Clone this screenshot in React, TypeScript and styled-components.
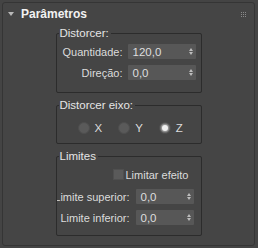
import styled, { createGlobalStyle } from 'styled-components';

const Global = createGlobalStyle`
html, body {
  margin: 0;
  padding: 0;
  background: #444444;
}
body {
  font-family: "Liberation Sans", Arial, sans-serif;
  font-size: 11px;
  color: #dcdcdc;
}
`;

const Panel = styled.div`
  box-sizing: border-box;
  margin: 2px 3px 2px 2px;
  width: 253px;
  height: 244px;
  background: #454545;
  border: 1px solid #353535;
  border-radius: 3px;
  display: flex;
  flex-direction: column;
`;

const Header = styled.div`
  display: flex;
  align-items: center;
  height: 22px;
  padding: 0 8px 0 5px;
  gap: 7px;
`;

const Arrow = styled.span`
  width: 0;
  height: 0;
  border-left: 3px solid transparent;
  border-right: 3px solid transparent;
  border-top: 4px solid #b8b8b8;
`;

const Title = styled.span`
  flex: 1;
  font-weight: bold;
  font-size: 12px;
  color: #f2f2f2;
`;

const Grip = styled.div`
  display: grid;
  grid-template-columns: repeat(3, 1px);
  gap: 1px;
  span {
    width: 1px;
    height: 1px;
    background: #8a8a8a;
  }
`;

const Body = styled.div`
  display: flex;
  flex-direction: column;
  align-items: center;
  gap: 6px;
  padding-top: 2px;
`;

const Group = styled.fieldset<{ $pad: string }>`
  box-sizing: border-box;
  width: 146px;
  margin: 0;
  padding: ${(p) => p.$pad};
  border: 1px solid #2c2c2c;
  border-radius: 2px;
  min-width: 0;
`;

const Legend = styled.legend`
  padding: 0 2px 0 1px;
  margin-left: 2px;
  font-size: 11.5px;
  line-height: 13px;
  color: #e6e6e6;
`;

const Rows = styled.div`
  display: flex;
  flex-direction: column;
  gap: 6px;
`;

const Row = styled.div<{ $label: number; $gap: number }>`
  display: grid;
  grid-template-columns: ${(p) => p.$label}px 1fr;
  column-gap: ${(p) => p.$gap}px;
  align-items: center;
  height: 15px;
`;

const Label = styled.div`
  display: flex;
  justify-content: flex-end;
  overflow: hidden;
  white-space: nowrap;
  font-size: 11px;
`;

const Spinner = styled.div`
  display: flex;
  align-items: center;
  height: 15px;
  background: #575757;
  border-radius: 1px;
  padding: 0 3px 0 5px;
  font-size: 11.5px;
  color: #dedede;
`;

const Value = styled.span`
  flex: 1;
`;

const Arrows = styled.span`
  display: flex;
  flex-direction: column;
  gap: 1px;
  i {
    width: 0;
    height: 0;
    border-left: 2.5px solid transparent;
    border-right: 2.5px solid transparent;
  }
  i:first-child {
    border-bottom: 3px solid #bdbdbd;
  }
  i:last-child {
    border-top: 3px solid #bdbdbd;
  }
`;

const RadioRow = styled.div`
  display: flex;
  align-items: center;
  gap: 16px;
  padding-left: 21px;
`;

const RadioItem = styled.label`
  display: flex;
  align-items: center;
  gap: 5px;
  font-size: 11.5px;
`;

const Radio = styled.span<{ $on?: boolean }>`
  box-sizing: border-box;
  width: 12px;
  height: 12px;
  border-radius: 50%;
  background: ${(p) => (p.$on ? '#6a6a6a' : '#5a5a5a')};
  border: 1px solid #4e4e4e;
  display: flex;
  align-items: center;
  justify-content: center;
  &::after {
    content: '';
    display: ${(p) => (p.$on ? 'block' : 'none')};
    width: 6px;
    height: 6px;
    border-radius: 50%;
    background: #f0f0f0;
    box-shadow: 0 0 1px 1px #9a9a9a;
  }
`;

const CheckRow = styled.div`
  display: flex;
  align-items: center;
  gap: 2px;
  padding-left: 56px;
  height: 11px;
  margin-bottom: 9px;
  font-size: 11px;
  white-space: nowrap;
`;

const Check = styled.span`
  flex: none;
  box-sizing: border-box;
  width: 11px;
  height: 11px;
  background: #5a5a5a;
  border: 1px solid #4f4f4f;
`;

const Spin = ({ value }: { value: string }) => (
  <Spinner>
    <Value>{value}</Value>
    <Arrows>
      <i />
      <i />
    </Arrows>
  </Spinner>
);

export default function App() {
  return (
    <>
      <Global />
      <Panel>
        <Header>
          <Arrow />
          <Title>Parâmetros</Title>
          <Grip>
            {Array.from({ length: 9 }).map((_, i) => (
              <span key={i} />
            ))}
          </Grip>
        </Header>
        <Body>
          <Group $pad="4px 5px 12px 0">
            <Legend>Distorcer:</Legend>
            <Rows>
              <Row $label={66} $gap={5}>
                <Label>Quantidade:</Label>
                <Spin value="120,0" />
              </Row>
              <Row $label={66} $gap={5}>
                <Label>Direção:</Label>
                <Spin value="0,0" />
              </Row>
            </Rows>
          </Group>
          <Group $pad="10px 0 9px 0">
            <Legend>Distorcer eixo:</Legend>
            <RadioRow>
              <RadioItem>
                <Radio />X
              </RadioItem>
              <RadioItem>
                <Radio />Y
              </RadioItem>
              <RadioItem>
                <Radio $on />Z
              </RadioItem>
            </RadioRow>
          </Group>
          <Group $pad="6px 7px 10px 0">
            <Legend>Limites</Legend>
            <CheckRow>
              <Check />
              Limitar efeito
            </CheckRow>
            <Rows>
              <Row $label={73} $gap={6}>
                <Label>Limite superior:</Label>
                <Spin value="0,0" />
              </Row>
              <Row $label={73} $gap={6}>
                <Label>Limite inferior:</Label>
                <Spin value="0,0" />
              </Row>
            </Rows>
          </Group>
        </Body>
      </Panel>
    </>
  );
}
